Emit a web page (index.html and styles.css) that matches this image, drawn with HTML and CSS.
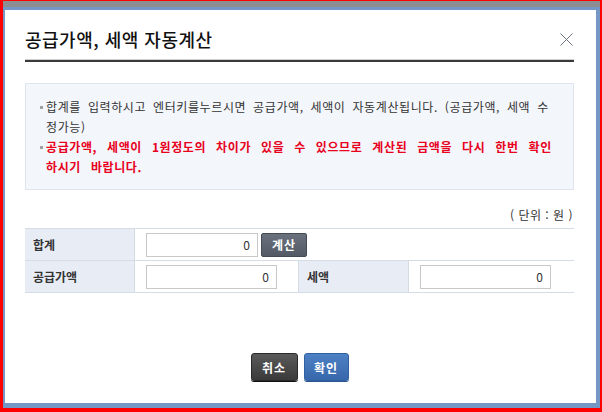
FILE: index.html
```html
<!DOCTYPE html>
<html lang="ko">
<head>
<meta charset="utf-8">
<title>공급가액, 세액 자동계산</title>
<link rel="stylesheet" href="styles.css">
</head>
<body>
<div class="frame">
  <div class="strip"></div>
  <div class="dialog">
    <div class="header">
      <h1 class="title">공급가액, 세액 자동계산</h1>
      <button class="close" aria-label="닫기">
        <svg width="13" height="13" viewBox="0 0 13 13"><path d="M0.5 0.5L12.5 12.5M12.5 0.5L0.5 12.5" stroke="#6b7280" stroke-width="1" fill="none"/></svg>
      </button>
    </div>
    <div class="info">
      <ul class="notes">
        <li class="note">합계를 입력하시고 엔터키를누르시면 공급가액, 세액이 자동계산됩니다. (공급가액, 세액 수정가능)</li>
        <li class="note warn">공급가액, 세액이 1원정도의 차이가 있을 수 있으므로 계산된 금액을 다시 한번 확인하시기 바랍니다.</li>
      </ul>
    </div>
    <div class="unit">( 단위 : 원 )</div>
    <div class="grid">
      <div class="lbl">합계</div>
      <div class="val span3">
        <input class="num short" type="text" value="0">
        <button class="calc">계산</button>
      </div>
      <div class="lbl last">공급가액</div>
      <div class="val last"><input class="num" type="text" value="0"></div>
      <div class="lbl last">세액</div>
      <div class="val last"><input class="num" type="text" value="0"></div>
    </div>
    <div class="actions">
      <button class="btn cancel">취소</button>
      <button class="btn ok">확인</button>
    </div>
  </div>
</div>
</body>
</html>
```
FILE: styles.css
```css
html, body {
  margin: 0;
  padding: 0;
}
body {
  background: #ff0000;
  font-family: "Noto Sans CJK KR", "Noto Sans", sans-serif;
  color: #333;
  font-size: 12px;
}
.frame {
  margin: 1px 2px 4px 3px;
  width: 597px;
  height: 407px;
  background: #7597c6;
  display: flex;
  flex-direction: column;
  box-sizing: border-box;
}
.strip {
  height: 6px;
  background: #8c8e92;
  flex: none;
}
.dialog {
  margin: 3px 4px 0 2px;
  height: 393px;
  background: #fff;
  box-sizing: border-box;
  padding: 0 22px 0 20px;
  display: flex;
  flex-direction: column;
}
.header {
  display: flex;
  justify-content: space-between;
  align-items: center;
  padding-top: 17px;
  padding-bottom: 9px;
  border-bottom: 2px solid #3a3a3a;
  box-shadow: 0 -1px 0 #d0d0d0 inset;
}
.title {
  margin: 0;
  font-size: 18px;
  line-height: 24px;
  font-weight: 500;
  color: #111;
  letter-spacing: 0.5px;
}
.close {
  border: 0;
  background: none;
  padding: 0;
  width: 13px;
  height: 13px;
  display: flex;
  margin-right: 1px;
}
.info {
  margin-top: 21px;
  height: 107px;
  box-sizing: border-box;
  background: #f3f6fb;
  border: 1px solid #dfe5ee;
  padding: 13px 0 0 14px;
}
.notes {
  margin: 0;
  padding: 0;
  list-style: none;
  width: 516px;
}
.note {
  position: relative;
  padding-left: 6px;
  line-height: 20px;
  letter-spacing: 0.6px;
  word-spacing: 3px;
  color: #333;
}
.note::before {
  content: "";
  position: absolute;
  left: 0;
  top: 9px;
  width: 3px;
  height: 3px;
  background: #a0a0a0;
}
.warn {
  color: #e8001c;
  font-weight: 700;
  word-spacing: 6px;
}
.unit {
  margin-top: 17px;
  text-align: right;
  line-height: 16px;
  padding-right: 1px;
  letter-spacing: 0.5px;
  color: #333;
}
.grid {
  margin-top: 5px;
  display: grid;
  grid-template-columns: 110px 164px 110px 1fr;
  border-top: 1px solid #d5dce6;
}
.lbl {
  background: #e8edf5;
  font-weight: 700;
  padding-left: 8px;
  display: flex;
  align-items: center;
  height: 32px;
  border-bottom: 1px solid #d5dce6;
  border-right: 1px solid #d5dce6;
  box-sizing: border-box;
}
.val {
  display: flex;
  align-items: center;
  gap: 3px;
  padding-left: 11px;
  height: 32px;
  border-bottom: 1px solid #d5dce6;
  border-right: 1px solid #d5dce6;
  box-sizing: border-box;
}
.val:last-child {
  border-right: 0;
}
.span3 {
  grid-column: span 3;
  border-right: 0;
}
.num {
  width: 131px;
  height: 24px;
  box-sizing: border-box;
  border: 1px solid #c8c8c8;
  text-align: right;
  padding: 0 7px 0 4px;
  font-family: "Noto Sans CJK KR", "Noto Sans", sans-serif;
  font-size: 12px;
  color: #333;
  outline: none;
}
.short {
  width: 112px;
}
.calc {
  width: 46px;
  height: 24px;
  border: 1px solid #454b55;
  border-radius: 2px;
  background: linear-gradient(#6a717d, #545a65);
  color: #fff;
  font-family: "Noto Sans CJK KR", sans-serif;
  font-weight: 700;
  font-size: 12px;
  letter-spacing: 1px;
  padding: 0;
}
.actions {
  margin-top: 60px;
  display: flex;
  justify-content: center;
  gap: 6px;
}
.btn {
  height: 28px;
  border-radius: 3px;
  color: #fff;
  font-family: "Noto Sans CJK KR", sans-serif;
  font-weight: 700;
  font-size: 12px;
  padding: 0;
  letter-spacing: 1px;
}
.cancel {
  width: 47px;
  background: linear-gradient(#5a5a5a, #3a3a3a);
  border: 1px solid #2a2a2a;
  box-shadow: 0 1px 0 #111;
}
.ok {
  width: 45px;
  background: linear-gradient(#4d80c4, #3868ab);
  border: 1px solid #30609f;
  box-shadow: 0 1px 0 #2b5590;
}
```
